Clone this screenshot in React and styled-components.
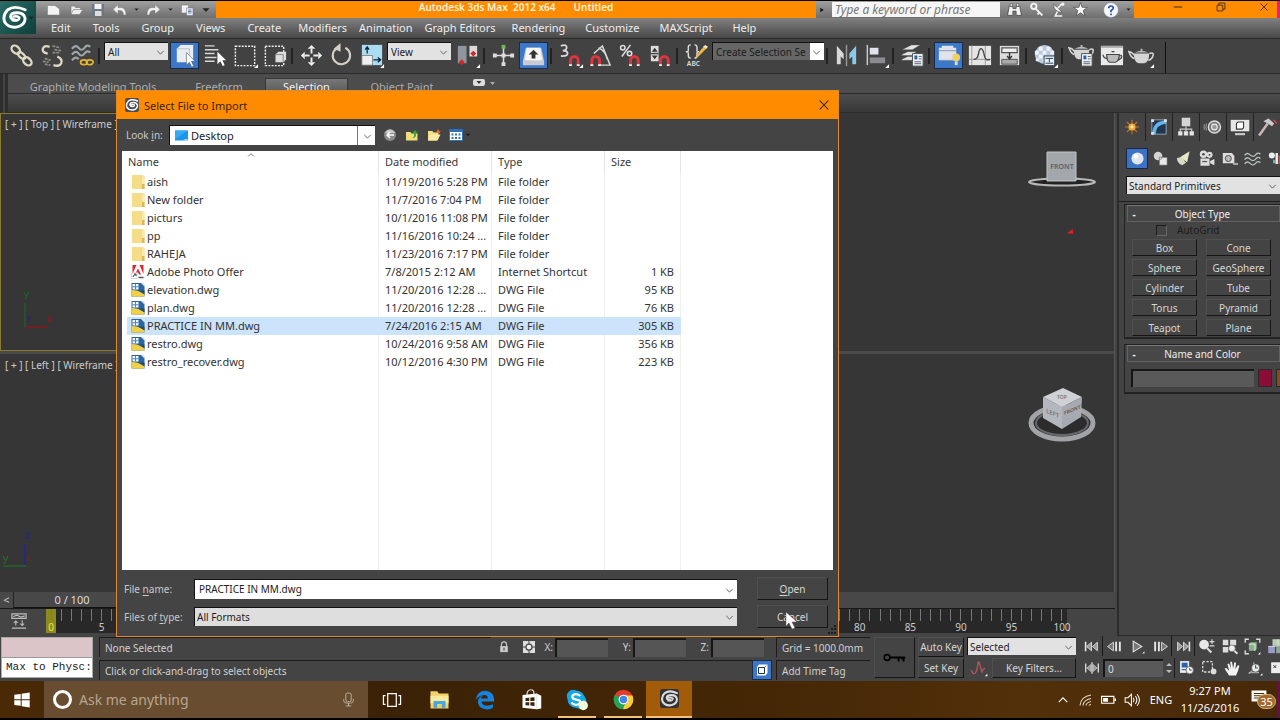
import React from "react";
import styled, { createGlobalStyle, css } from "styled-components";

const Global = createGlobalStyle`
  * { box-sizing: border-box; }
  body { margin: 0; background: #000; font-family: "Noto Sans", "Open Sans", sans-serif; font-size: 10px; color: #ddd; }
  button, input, select { font: inherit; color: inherit; margin: 0; padding: 0; border: 0; border-radius: 0; background: none; outline: none; }
  svg { display: block; flex: none; }
`;

/* ---------- drawings ---------- */
const L = "#e6e6e6";
const caret = <path d="M27 23v4h-4z" fill="#fff" />;
const magnet = <path d="M14 24v-5a4 4 0 0 1 8 0v5" fill="none" stroke="#e0343f" strokeWidth="3" />;
const magnetTips = <path d="M12.500 23h3v2h-3zM20.500 23h3v2h-3z" fill="#eee" />;
const teapot = (
  <>
    <path d="M6 12q0 9 5 10h6q5-1 5-10z" fill="#d5d5d5" />
    <path d="M7 11q7-4 14 0zM13 7h2v2h-2z" fill="#bbb" />
    <path d="M6.500 17Q3 16 1 10l3 1 3 3M22 12q5-2 4 2t-5 5" fill="none" stroke="#d5d5d5" strokeWidth="1.600" />
  </>
);
const sheet = (
  <>
    <path d="M14 12h11v13H14z" fill="#eef2f6" stroke="#555" />
    <path d="M16 14h3v4h-3z" fill="#2b5fa5" />
    <path d="M20.500 15h3M20.500 17.500h3M16 20.500h7M16 22.500h7" stroke="#567" />
  </>
);
const icons = {
  link: (
    <g fill="none" stroke="#ddd9c4" strokeWidth="2.400">
      <ellipse cx="7" cy="8" rx="5" ry="3.500" transform="rotate(42 7 8)" />
      <ellipse cx="13" cy="14" rx="4.500" ry="2.400" transform="rotate(42 13 14)" />
      <ellipse cx="19" cy="20" rx="5" ry="3.500" transform="rotate(42 19 20)" />
    </g>
  ),
  unlink: (
    <g fill="none" stroke="#ddd9c4" strokeWidth="2.400">
      <path d="M9 12Q3 11 4 7t7-2M19 15q6 3 4 7t-8 2" />
      <path d="M14 4l8 2M16 8l7 1M14 11l8 0M6 17l6 2M4 20l6 1M6 23l6 1" stroke="#8d8d86" strokeWidth="1.800" strokeDasharray="3 1" />
    </g>
  ),
  bind: (
    <>
      <path d="M3 7q4-5 7-1t6 0 6-1M3 13q4-5 7-1t6 0 6-1M3 19q4-5 7-1" fill="none" stroke="#9fa6aa" strokeWidth="2.200" />
      <path d="M12 21a3.500 2.500 0 1 0 7 0a3.500 2.500 0 1 0-7 0M18 21a3.500 2.500 0 1 0 7 0a3.500 2.500 0 1 0-7 0" fill="none" stroke="#e5b52b" strokeWidth="1.800" />
    </>
  ),
  selectObj: (
    <>
      <path d="M6 7l4-4h13v14l-4 4H6z" fill="#e9edf2" />
      <path d="M6 7h13v14" fill="none" stroke="#b7bfc9" />
      <path d="M16 11v13l3-3 2.500 5 2-1-2.300-5H25z" fill="#fff" stroke="#456" strokeWidth=".6" />
    </>
  ),
  byName: (
    <>
      <path d="M3 4h10M3 8h14M3 12h10M3 16h12M3 20h10" stroke="#d8d8d8" strokeWidth="1.500" />
      <path d="M16 10v13l3-3 2.500 5 2-1-2.300-5H25z" fill="#fff" />
    </>
  ),
  rect: <><path d="M3.500 4.500h20v20h-20z" fill="none" stroke="#eee" strokeWidth="1.500" strokeDasharray="2 1.300" />{caret}</>,
  windowSel: (
    <>
      <path d="M3.500 4.500h19v20h-19z" fill="none" stroke="#eee" strokeWidth="1.500" strokeDasharray="2 1.300" />
      <path d="M14 13l3-3h8v8l-3 3h-8z" fill="#ddd" /><path d="M14 13h8v8" fill="none" stroke="#888" />
    </>
  ),
  move: (
    <>
      <path d="M14 7v5M14 16v5M7 14h5M16 14h5" stroke="#eee" strokeWidth="2" />
      <path d="M14 3l4 4h-8zM14 25l4-4h-8zM3 14l4-4v8zM25 14l-4-4v8z" fill="#eee" />
    </>
  ),
  rotate: <><path d="M9 6.500a9 9 0 1 0 9-.5" fill="none" stroke="#d4d0c8" strokeWidth="2.200" /><path d="M13 1v9l-7-3z" fill="#d4d0c8" /></>,
  scale: (
    <>
      <path d="M4 3h21v21H4z" fill="#a9ddf4" /><path d="M4 14h11v10H4z" fill="#efefef" stroke="#666" strokeWidth=".7" />
      <path d="M9.500 12V5M7.500 8l2-3 2 3M16 18.500h7M20.500 16l3 2.500-3 2.500" fill="none" stroke="#123" strokeWidth="1.300" />{caret}
    </>
  ),
  pivot: (
    <>
      <path d="M4 4h9v18H4z" fill="#8f969e" /><path d="M16 4h8v11h-8z" fill="#d9d9d9" />
      <path d="M8 18l3 3-3 3-3-3zM20 9l3 3-3 3-3-3z" fill="#d22" />{caret}
    </>
  ),
  manip: (
    <><path d="M5 14h18M14 6v17" stroke="#ddd" strokeWidth="1.600" /><path d="M12 3h4v4h-4z" fill="#6dbb57" /><path d="M3 12h4v4H3zM21 12h4v4h-4zM12 21h4v4h-4zM12 12h4v4h-4z" fill="#ddd" /></>
  ),
  keyboard: (
    <><path d="M3 20L6 6h16l3 14v4H3z" fill="#c8cbd0" /><path d="M5 19L7 6h14l2 13z" fill="#f6f6f6" /><path d="M14 8l5 5h-3v4h-4v-4H9z" fill="#333" /></>
  ),
  snap3: <><path d="M4 4q6-2 6 1.500T6 9q5 0 5 3t-7 2.500" fill="none" stroke="#ddd" strokeWidth="1.800" />{magnet}{magnetTips}{caret}</>,
  angle: (
    <><path d="M7 12L16 4l8 20H14M12 6q7 3 9 12" fill="none" stroke="#d8d8d8" strokeWidth="1.500" /><g transform="translate(-9 0)">{magnet}{magnetTips}</g></>
  ),
  pct: (
    <><g fill="none" stroke="#ddd" strokeWidth="1.600"><circle cx="6" cy="6" r="2.300" /><circle cx="13" cy="12" r="2.300" /><path d="M14 3L5 15" /></g>{magnet}{magnetTips}</>
  ),
  spin: (
    <><path d="M4 4h8v16H4z" fill="#ddd" /><path d="M4 12h8" stroke="#444" strokeWidth="1.500" /><path d="M8 6l3 4H5zM8 18l3-4H5z" fill="#333" />{magnet}{magnetTips}</>
  ),
  abc: (
    <>
      <path d="M8 3q-3 0-2.500 4T3 10q3 0 2.500 3T8 17M12 3q3 0 2.500 4t2 3q-2.500 0-2 3T12 17" fill="none" stroke="#ddd" strokeWidth="1.500" />
      <path d="M13 15L22 4l3 2-10 10z" fill="#e9b64a" /><path d="M21 5l2-2 3 2-2 2z" fill="#f2e6c4" />
      <text x="4" y="25" fontSize="7" fontWeight="600" fill="#ddd">ABC</text>
    </>
  ),
  mirror: <><path d="M4 4l7 8v6l-3-3v8H4z" fill="#d8d8d8" /><path d="M14 3v22" stroke="#999" strokeWidth="1.500" /><path d="M24 4l-7 8v6l3-3v8h4z" fill="#8ccbe8" /></>,
  align: <><path d="M4.500 3v21" stroke="#ccc" strokeWidth="1.500" /><path d="M7 6h9v7H7z" fill="#dfe3ee" /><path d="M7 16h16v6H7z" fill="#8c8c90" />{caret}</>,
  layers: <><path d="M3 8l10-5h9l-8 5zM3 13l6-3h9l-5 4H3zM3 18l6-3h5v4H3z" fill="#e4e4e4" stroke="#555" strokeWidth=".5" />{sheet}</>,
  ribbon: (
    <><path d="M4 6h3V4h12v2h3v13H4z" fill="#dfe3ec" /><path d="M4 9h18M6 19h14" stroke="#8c95a8" /><circle cx="22" cy="16" r="4" fill="#f3cf5b" /><path d="M20.500 20h3v4h-3z" fill="#ddd" /></>
  ),
  curve: <><path d="M3 4h23v20H3z" fill="#e5e5e5" /><path d="M6 4v20M3 18h23M20 4v20" stroke="#999" /><path d="M8 18q4 0 5-6t3-5 3 7 6 4" fill="none" stroke="#444" strokeWidth="1.400" /></>,
  schem: <><path d="M4 4h20v20H4z" fill="#ddd" /><path d="M6 6h16v5H6z" fill="#eee" stroke="#555" strokeWidth="1.300" /><path d="M6 18h16v5H6z" fill="#aaa" stroke="#555" /><path d="M14 11v6M11.500 14.500l2.500 3 2.500-3" stroke="#333" strokeWidth="1.400" fill="none" /></>,
  material: (
    <><circle cx="13" cy="13" r="10" fill="#b9c8dc" /><path d="M7 5h4v4H7zM15 5h4v4h-4zM3 9h4v4H3zM11 9h4v4h-4zM19 9h4v4h-4zM7 13h4v4H7zM11 17h3v4h-3zM4 17h3v3H4z" fill="#eef3fa" /><path d="M12.500 14.500h11v10h-11z" fill="#e6ecf4" stroke="#345" /><path d="M14 17h8M14 22h8M18 17v4" stroke="#345" />{caret}</>
  ),
  setup: <><g transform="translate(0 -4)">{teapot}</g>{sheet}</>,
  frame: <><path d="M3 4h23v20H3z" fill="#e9e9e9" /><path d="M3 5h23" stroke="#aaa" strokeWidth="2" /><path d="M9 13q0 7 3 8h6q4-1 4-8zM9 17q-3 0-4-4M22 14q4-1 2 3l-3 2M14 10h3" fill="#bbb" stroke="#444" strokeWidth="1.200" /></>,
  render: <>{teapot}{caret}</>,
  /* command panel */
  sun: <><path d="M14 4v20M4 14h20M7 7l14 14M21 7L7 21" stroke="#c9761f" strokeWidth="1.500" /><circle cx="14" cy="14" r="5" fill="#f2a83c" /><circle cx="14" cy="14" r="2" fill="#fff0b8" /></>,
  modify: <><path d="M4 4h20v20H4z" fill="#20374e" stroke="#b9c4cc" /><path d="M7 24Q7 8 24 7" fill="none" stroke="#62b5ee" strokeWidth="5" /><path d="M3 3h4v4H3zM21 3h4v4h-4zM3 21h4v4H3z" fill="#ddd" /></>,
  hierarchy: <><path d="M8 1h12v12H8z" fill="#d5d5d5" /><path d="M14 13v4M6 21v-4h16v4M14 17v5" stroke="#ccc" strokeWidth="1.600" fill="none" /><path d="M3 20h6v6H3zM11 20h6v6h-6zM19 20h6v6h-6z" fill="#e3e3e3" /></>,
  motion: <><circle cx="16" cy="14" r="8.500" fill="#777" stroke="#ddd" strokeWidth="2" /><circle cx="16" cy="14" r="4" fill="#999" stroke="#eee" strokeWidth="1.500" /><path d="M5 9q-2 5 0 10M2 10q-1 4 0 8" stroke="#999" fill="none" strokeWidth="1.400" /></>,
  display: <><path d="M1 4h26v16H1z" fill="#e6e6e6" /><path d="M9 9l2-2h8v8l-2 2H9z" fill="#fff" stroke="#333" strokeWidth="1.500" /><path d="M7 24h14" stroke="#ccc" strokeWidth="3" /></>,
  hammer: <><path d="M3 26L15 9" stroke="#c9b5b0" strokeWidth="3.500" /><path d="M9 6l7-4 8 7-3 4-6-4z" fill="#ccc" /><path d="M23 4l5 5" stroke="#c44" strokeWidth="2.500" /></>,
  sphere: <><circle cx="14" cy="14" r="10" fill="#dfe6ef" /><circle cx="11" cy="10" r="4" fill="#fff" /></>,
  shapes: <><circle cx="10" cy="10" r="7" fill="#d4d4d4" /><path d="M12 12h13v13H12z" fill="#e8e8e8" stroke="#555" /><path d="M12 16q5 0 5-4" stroke="#777" fill="none" /></>,
  light: <><path d="M24 2l-4 18-12-8z" fill="#e9e6cc" /><path d="M3 13l8-1 7 9-6 4Q4 22 3 13z" fill="#d9dac6" /></>,
  camera: <><circle cx="9" cy="7" r="6" fill="#ddd" /><circle cx="19" cy="8" r="5" fill="#ddd" /><path d="M4 14h15v12H4zM20 18l7-3v10l-7-3z" fill="#ddd" /><circle cx="9" cy="7" r="2" fill="#444" /><circle cx="19" cy="8" r="1.500" fill="#444" /><path d="M7 19h8" stroke="#555" strokeWidth="2" /></>,
  tape: <><path d="M3 5h15l4 5v12H3z" fill="#ddd" /><circle cx="12" cy="14" r="5" fill="#bbb" stroke="#444" strokeWidth="1.500" /><path d="M20 23h8" stroke="#ccc" strokeWidth="2.500" /></>,
  waves: <path d="M1 9q4-6 9-1t9 0 8-1M1 16q4-6 9-1t9 0 8-1M1 23q4-6 9-1t9 0 8-1" fill="none" stroke="#b9c0c0" strokeWidth="2.200" />,
  systems: <><circle cx="8" cy="9" r="5" fill="#eee" /><path d="M14 5h4v18h-4z" fill="#eee" /><path d="M19 9h4v14h-4z" fill="#d44" /><path d="M10 16h4v6h-4z" fill="#6bb" /></>,
  /* quick access */
  newDoc: <path d="M2 5h15l9 7v12H2z" fill="#f2f2f2" stroke="#777" />,
  open: <path d="M3 22V6h7l2 3h10v4M3 23l5-10h19l-7 10z" fill="#ededed" stroke="#777" strokeWidth="1.200" />,
  save: <><path d="M2 2h24v24H2z" fill="#6e7784" /><path d="M7 2h14v10H7z" fill="#f3f3f3" /><path d="M8 16h13v10H8z" fill="#ddd" /></>,
  undo: <path d="M1 13l10-10v6h7q9 1 9 15h-5q0-8-6-9h-5v7z" fill="#f0f0f0" stroke="#777" />,
  redo: <path d="M27 13l-10-10v6h-7q-9 1-9 15h5q0-8 6-9h5v7z" fill="#f0f0f0" stroke="#777" />,
  project: <><path d="M2 4h14v16H2z" fill="#f0f0f0" stroke="#777" /><path d="M12 10h13v15H12z" fill="#eef" stroke="#667" /><path d="M15 14h7M15 17h7M15 20h7" stroke="#368" strokeWidth="1.500" /></>,
  down: <path d="M2 8h24l-12 13z" fill="#222" />,
  right: <path d="M6 3l16 11-16 11z" fill="#111" />,
  binoc: <><path d="M4 8h7v4h6V8h7l3 17H17v-8h-6v8H1z" fill="#f1f1f1" stroke="#444" strokeWidth="1.500" /><path d="M6 3h4v5H6zM18 3h4v5h-4z" fill="#f1f1f1" stroke="#444" /></>,
  key: <><circle cx="9" cy="8" r="5" fill="none" stroke="#f4f4f4" strokeWidth="3.500" /><path d="M12 12l13 13M20 19l-4 4" stroke="#f4f4f4" strokeWidth="3.500" /></>,
  dish: <><path d="M5 4q0 15 16 15z" fill="#f4f4f4" stroke="#444" /><path d="M12 12l8-8M12 18l-4 8h13" stroke="#f4f4f4" strokeWidth="2.800" fill="none" /><circle cx="22" cy="4" r="3" fill="#f4f4f4" /></>,
  star: <path d="M14 1l3 9h10l-8 6 3 10-8-6-8 6 3-10-8-6h10z" fill="#fafafa" stroke="#444" strokeWidth="1.300" />,
  help: <><circle cx="14" cy="14" r="13" fill="#f7f7f7" stroke="#6b7f9f" /><path d="M10 11q0-4 4-4t4 4q0 2-4 4v3M14 20v3" fill="none" stroke="#2454b4" strokeWidth="3" /></>,
  /* file dialog */
  back: <><circle cx="14" cy="14" r="12" fill="#8b8b8b" /><path d="M3 10q11-14 22 0" fill="#ccc" /><path d="M22 14H8M14 8l-6 6 6 6" fill="none" stroke="#fff" strokeWidth="3" /></>,
  up: <><path d="M2 8h9l2 3h12v14H2z" fill="#f4dc7c" /><path d="M13 21q6-1 5-10h-4l6-7 6 7h-4q1 9-9 10z" fill="#35a630" /></>,
  newFolder: <><path d="M2 6h9l2 3h10v4l-4 12H2z" fill="#f7df85" /><path d="M7 13h20l-6 12H2z" fill="#fbe9a5" /><path d="M23 3v8M19 7h8M20 4l6 6" stroke="#e2632d" strokeWidth="2" /></>,
  views: <><path d="M1 3h26v22H1z" fill="#fff" stroke="#2d6fbd" strokeWidth="2" /><path d="M1 4h26v4H1z" fill="#2d6fbd" /><g fill="#2f74bd"><path d="M5 11h4v4H5zM12 11h4v4h-4zM19 11h4v4h-4zM5 18h4v4H5zM12 18h4v4h-4zM19 18h4v4h-4z" /></g></>,
  folder: <><path d="M2 0h20l5 2v26H2z" fill="#f5dc86" /><path d="M22 3h5v25h-5z" fill="#fae9ad" /><path d="M22 18h5v10h-5z" fill="#d8b95c" /></>,
  adobe: <><path d="M4 0h20v18H4z" fill="#fff" /><path d="M3 18L11 0H3zM25 18L17 0h8zM14 7l6 12h-4l-2-4h-4z" fill="#d9282f" /><path d="M1 16h11v11H1z" fill="#fff" stroke="#aaa" /><path d="M4 24q0-4 5-5M6 18h4v4" fill="none" stroke="#246" strokeWidth="2" /><path d="M15 25h10" stroke="#555" strokeWidth="3" /></>,
  dwg: <><path d="M1 0h20l6 6v21H1z" fill="#2c66a0" /><path d="M1 14q14 0 26 8v5H1z" fill="#f0d046" /><path d="M14 15h13v8z" fill="#284a70" /><path d="M3 2h12v11H3z" fill="#f5f9fc" /><path d="M9 2v11M3 7.500h12" stroke="#3b8bc9" strokeWidth="2" /><path d="M20 0h7v7z" fill="#dfe8ef" /></>,
  monitor: <><path d="M1 3h26v20H1z" fill="#1b95ea" /><path d="M1 3h26L1 20z" fill="#3aa9f3" /><path d="M20 20h6v3h-6z" fill="#bde" /></>,
  /* status bar */
  lock: <><path d="M5 12h18v14H5z" fill="#c9c9c9" /><path d="M8 12V8q0-6 6-6t6 6v4" fill="none" stroke="#c9c9c9" strokeWidth="2.500" /><path d="M14 16v6" stroke="#444" strokeWidth="2.500" /></>,
  gear: <><path d="M2 2h24v24H2z" fill="#ddd" /><circle cx="14" cy="14" r="6" fill="#eee" stroke="#444" strokeWidth="2.500" /><path d="M14 2v6M14 20v6M2 14h6M20 14h6" stroke="#444" strokeWidth="2" /></>,
  cubeOut: <><path d="M8 3h17v17l-4 5H4V8z" fill="#fff" /><path d="M7 9h12v12H7z" fill="#fff" stroke="#234" strokeWidth="2" /><path d="M19 9l4-4" stroke="#234" /></>,
  bigKey: <><circle cx="5" cy="14" r="3.500" fill="none" stroke="#000" strokeWidth="2" /><path d="M9 14h18M19 14v5M25 14v5M22 15h3v3" stroke="#000" strokeWidth="2.400" fill="none" /></>,
  sine: <><path d="M2 17q3 8 6 5t4-13 4 2 3 9 4-6" fill="none" stroke="#b9555f" strokeWidth="2" />{caret}</>,
  trackOpen: <><path d="M3 3h22v7H3zM3 25h22" fill="none" stroke="#bbb" strokeWidth="2" /><path d="M5 7l6-2 6 3 6-2M9 21v-7M6 17l3-3 3 3M19 13v7M16 18l3 3 3-3" stroke="#bbb" strokeWidth="1.700" fill="none" /></>,
  start: <><path d="M3 5v18" stroke={L} strokeWidth="3" /><path d="M14 6v16L5 14zM25 6v16l-9-8z" fill="#999" stroke={L} strokeWidth="1.600" /></>,
  end: <><path d="M25 5v18" stroke={L} strokeWidth="3" /><path d="M14 6v16l9-8zM3 6v16l9-8z" fill="#999" stroke={L} strokeWidth="1.600" /></>,
  prev: <><path d="M12 6v16L1 14z" fill="#777" stroke={L} strokeWidth="1.600" /><path d="M17 5v18M24 5v18" stroke={L} strokeWidth="3.500" /></>,
  next: <><path d="M16 6v16l11-8z" fill="#777" stroke={L} strokeWidth="1.600" /><path d="M4 5v18M11 5v18" stroke={L} strokeWidth="3.500" /></>,
  play: <><path d="M6 4v20l16-10z" fill="#777" stroke={L} strokeWidth="2" />{caret}</>,
  keyMode: <><path d="M3 6v16M25 6v16M14 4v20" stroke={L} strokeWidth="2.200" /><path d="M12 8v12l-7-6zM16 8v12l7-6z" fill="#999" stroke={L} /></>,
  timeCfg: <><path d="M2 2h17v22H2z" fill="#e8eef6" /><path d="M5 5h11v9H5z" fill="#2d62a8" /><path d="M5 18h8" stroke="#456" strokeWidth="2" /><circle cx="20" cy="19" r="7" fill="#f5f5f5" stroke="#555" strokeWidth="1.500" /><path d="M20 15v4h4" stroke="#333" fill="none" strokeWidth="1.500" /></>,
  zoom: <><circle cx="10" cy="11" r="8" fill="#e8e8e8" /><path d="M15 17l7 7" stroke="#ddd" strokeWidth="3.500" /><path d="M23 2v8M19 6h8M19 13h8" stroke="#ddd" strokeWidth="1.800" /></>,
  zoomAll: <><path d="M3 3h9v9H3zM15 3h10v9H15zM3 15h9v9H3z" fill="#ddd" /><circle cx="18" cy="17" r="5.500" fill="#eee" stroke="#555" /><path d="M22 21l5 5" stroke="#ddd" strokeWidth="3" /></>,
  extents: <><path d="M2 8V2h6M20 2h6v6M8 26H2v-6" stroke="#ddd" strokeWidth="2.200" fill="none" /><path d="M8 10l3-3h10v11l-3 3H8z" fill="#8fae8c" /><path d="M8 10h10v11" stroke="#dfe" fill="none" strokeWidth="1.500" />{caret}</>,
  extAll: <><path d="M9 2h18v11H9z" fill="#b9cdb5" /><path d="M2 13h11v12H2z" fill="#9c9bc6" /><path d="M15 15h12v10H15z" fill="#8a9" /><path d="M18 2v11M2 14h25" stroke="#eee" /></>,
  region: <><path d="M3 3h17v18H3z" fill="none" stroke="#ddd" strokeWidth="2.200" strokeDasharray="4 2.500" /><circle cx="22" cy="20" r="5" fill="#ddd" /></>,
  hand: <path d="M9 27Q5 22 1 15l3-1 5 5-3-12 3-1 3 9-1-12h3l2 12 2-11 3 1-1 11 4-7 3 1q-2 9-6 17z" fill="#f3f3f3" />,
  orbit: <><path d="M3 22h18M12 4v12L3 24" stroke="#aaa" strokeWidth="2" fill="none" /><circle cx="15" cy="14" r="7" fill="#eee" stroke="#444" /><path d="M15 9v5h4" stroke="#363" strokeWidth="2" fill="none" />{caret}</>,
  maxi: <><path d="M2 4h25v19H2z" fill="#eee" /><path d="M6 9l5 5M11 9l-5 5M18 9l5 5M23 9l-5 5" stroke="#333" strokeWidth="1.700" /></>,
  /* taskbar */
  windows: <path d="M2 6l10-1.500V13H2zM13.500 4.300L26 2.500V13H13.500zM2 14.500h10V23L2 21.700zM13.500 14.500H26v11l-12.500-1.800z" fill="#fff" />,
  mic: <><rect x="9" y="2" width="10" height="16" rx="3" fill="none" stroke="#cbbda8" strokeWidth="1.600" /><path d="M5 13v3q0 5 9 5t9-5v-3M14 21v5M9 26h10" fill="none" stroke="#cbbda8" strokeWidth="1.600" /></>,
  taskview: <path d="M8 5h12v18H8zM5 8H2v12h3M23 8h3v12h-3" fill="none" stroke="#fff" strokeWidth="1.700" />,
  explorer: <><path d="M2 3h9l2 3h13v20H2z" fill="#f2cf67" /><path d="M2 9h24v10H2z" fill="#fbe9a0" /><path d="M6 25v-9h16v9h-5v-5h-6v5z" fill="#47a8dc" /></>,
  edge: <path d="M1 14Q3 1 15 1q12 1 12 15H9q1 6 8 6 4 0 8-2v5q-5 3-10 2Q4 25 4 16q1-7 8-9-4 3-4 5h10q0-5-5-5-7 0-12 7z" fill="#1684de" />,
  store: <><path d="M2 8l19-2 6 3v17l-6 1-19-2z" fill="#fff" /><path d="M21 6v21" stroke="#ddd" /><path d="M8 8q0-7 5-7t4 6" fill="none" stroke="#ddd" strokeWidth="1.600" /><path d="M6 12l5-.5V16H6zM12.500 11.300L18 11v5h-5.500zM6 17.500h5V22l-5-.5zM12.500 17.500H18v5l-5.500-.5z" fill="#3b2508" /></>,
  skype: <><circle cx="9" cy="9" r="8" fill="#14a8e6" /><circle cx="17" cy="16" r="9" fill="#14a8e6" /><circle cx="13" cy="13" r="11" fill="#14a8e6" /><path d="M18 9q-2-3-6-2.500T8 10t5 3.500 5 3-4 3.500-7-3" fill="none" stroke="#fff" strokeWidth="2.800" /><circle cx="22" cy="21" r="6" fill="#eefbd8" /></>,
  chrome: <><circle cx="14" cy="14" r="13" fill="#e33b2e" /><path d="M14 14L2.700 7.500A13 13 0 0 0 14 27z" fill="#23a455" /><path d="M14 14L14 27A13 13 0 0 0 25.800 8.500H14z" fill="#f8cf32" /><path d="M14 14L8 18l4 9 5-8z" fill="#23a455" /><circle cx="14" cy="14" r="6.500" fill="#fff" /><circle cx="14" cy="14" r="5" fill="#4283ee" /></>,
  chevUp: <path d="M4 19L14 9l10 10" fill="none" stroke="#fff" strokeWidth="2.500" />,
  wifi: <g fill="none" stroke="#e4d8c6" strokeWidth="2.200"><path d="M2 25Q4 7 24 4M8 25q1-11 16-14M14 25q1-6 10-8M20 25q0-2 4-2" /></g>,
  battery: <><path d="M1 8h23v13H1z" fill="none" stroke="#fff" strokeWidth="2.200" /><path d="M4 11h9v7H4zM25 12h3v5h-3z" fill="#fff" /></>,
  volume: <><path d="M2 10h5l6-6v20l-6-6H2z" fill="none" stroke="#fff" strokeWidth="1.800" /><path d="M16 10q3 4 0 8M20 7q5 7 0 14M23 4q8 10 0 20" fill="none" stroke="#fff" strokeWidth="1.800" /></>,
  note: <><path d="M1 1h26v19H17l-5 6v-6H1z" fill="#fff" /><path d="M5 6h18M5 10h18M5 14h12" stroke="#4a2c08" strokeWidth="1.800" /></>,
  dropdown: <path d="M4 9l10 10L24 9" fill="none" stroke="#555" strokeWidth="2.800" />,
  close: <path d="M4 4l20 20M24 4L4 24" stroke="#3d2a10" strokeWidth="2.500" />,
  min: <path d="M2 14h24" stroke="#3d2a10" strokeWidth="2.800" />,
  restore: <path d="M3 9h16v16H3zM8 9V3h17v17h-6" fill="none" stroke="#3d2a10" strokeWidth="2.500" />,
};
const Icon = ({ name, size = 28, h }) => (
  <svg width={size} height={h || size} viewBox="0 0 28 28" aria-hidden="true">{icons[name]}</svg>
);
const MaxLogo = ({ size, plate, ink }) => (
  <svg width={size} height={size} viewBox="0 0 28 28" aria-hidden="true">
    {plate && <rect width="28" height="28" rx="4" fill={plate} />}
    <path d="M25 6Q14 1 7 6 1 12 4 19q4 6 12 5 9-2 9-9-1-6-8-6-7 0-7 4 0 3 5 3.500" fill="none" stroke={ink} strokeWidth="3" strokeLinecap="round" />
    <path d="M12 17q7 1 7-3-3-2-6-1" fill="none" stroke={ink} strokeWidth="2.500" strokeLinecap="round" />
  </svg>
);

/* ---------- shared controls ---------- */
const SelectBox = styled.span`
  position: relative; display: flex; height: ${(p) => p.$h || 18}px; flex: ${(p) => (p.$w ? `0 0 ${p.$w}px` : "1 1 0")}; min-width: 0;
  background: ${(p) => p.$bg || "#e2e2e2"}; color: ${(p) => p.$ink || "#222"};
  border: solid #111; border-width: 1px 0 0 1px;
  select { appearance: none; width: 100%; padding-left: ${(p) => p.$pad || 3}px; font-size: ${(p) => p.$fs || 10}px; }
  svg { position: absolute; right: 3px; top: calc(50% - 4px); pointer-events: none; }
`;
const Select = ({ id, label, value, ...p }) => (
  <SelectBox {...p}>
    <select id={id} aria-label={label}><option>{value}</option></select>
    <Icon name="dropdown" size={9} />
  </SelectBox>
);
const FlatButton = styled.button`
  display: flex; align-items: center; justify-content: center; white-space: nowrap; min-width: 0;
  height: ${(p) => p.$h}px; color: #d6d6d6;
  background: #444; border: 1px solid; border-color: #505050 #151515 #151515 #505050;
  u { text-underline-offset: 2px; }
`;

/* ---------- application frame ---------- */
const Window = styled.div`position: relative; display: flex; flex-direction: column; min-height: 100vh; overflow: hidden; background: #444; border: solid #000; border-width: 1px 0 2px;`;
const Header = styled.header`display: flex; background: linear-gradient(#ff8c00 17px, #808080 17px, #484848 37px); height: 37px;`;
const LogoButton = styled.button`width: 36px; height: 33px; display: flex; align-items: center; padding-left: 1px; background: linear-gradient(135deg, #2c6d66, #0c3f3c);`;
const HeaderBody = styled.div`flex: 1; min-width: 0;`;
const TitleBar = styled.div`display: flex; height: 17px; color: #fff3dc;`;
const GreyStrip = styled.div`
  display: flex; align-items: center; width: ${(p) => p.$w}px; background: linear-gradient(#a0a0a0, #6e6e6e);
  gap: 7px; padding: 0 ${(p) => p.$pad}px; overflow: hidden;
  button { display: flex; }
`;
const Title = styled.h1`flex: 1; margin: 0; display: flex; justify-content: center; gap: 18px; font-size: 10px; line-height: 12px; font-weight: 600; white-space: pre;`;
const Search = styled.input`flex: 1; min-width: 0; height: 15px; padding-left: 3px; background: #f6f6f6; color: #555; font-style: italic; font-size: 12px; &::placeholder { color: #777; }`;
const HelpButton = styled.button`margin-left: 8px;`;
const WinControls = styled.div`display: flex; width: 146px; justify-content: flex-end; align-items: flex-start; gap: 33px; padding: 1px 8px 0 0; border-right: 3px solid #f0188c; button { display: flex; }`;
const MenuBar = styled.nav`display: flex; align-items: center; height: 20px; padding-left: 4px;`;
const MenuItem = styled.button`padding: 0 ${(p) => p.$pad}px; color: #eee; font-size: 11px; line-height: 20px; white-space: nowrap;`;

const Toolbar = styled.div`display: flex; height: 36px; gap: 2px; padding: 3px 0 0 8px; background: #424242; border: solid #2a2a2a; border-width: 1px 0;`;
const Tool = styled.button`
  display: flex; align-items: center; justify-content: center; flex: 0 0 28px; height: ${(p) => p.$h || 27}px;
  ${(p) => p.$on && css`background: #3b78c9; border: 1px solid #1b2c48;`}
`;
const ToolSep = styled.span`flex: 0 0 4px; height: 16px; margin-top: 6px; border-left: 2px solid #222;`;
const ToolEnd = styled.span`margin-left: 8px; border-left: 1px solid #111;`;

const Ribbon = styled.div`border-left: 8px double #2e2e2e;`;
const RibbonTabs = styled.div`display: flex; height: 19px; align-items: flex-end; background: #4c4c4c; padding-left: 6px;`;
const RibbonTab = styled.button`
  height: 15px; margin-right: ${(p) => p.$after || 0}px; width: ${(p) => p.$w}px; color: ${(p) => (p.$on ? "#f0f0f0" : "#adadad")};
  font-size: 11px; line-height: 11px; white-space: nowrap; border: 1px solid transparent; border-bottom: 0;
  ${(p) => p.$on && css`background: linear-gradient(#777, #5a5a5a); border-color: #383838;`}
`;
const RibbonPanel = styled.div`height: 20px; background: linear-gradient(#4d4d4d, #383838); border: solid #2c2c2c; border-width: 1px 0;`;

const Main = styled.main`display: flex; flex: 1; min-height: 0;`;
const Stage = styled.div`flex: 1; min-width: 0; display: flex; flex-direction: column;`;
const Viewports = styled.div`flex: 1; min-height: 0; display: grid; grid-template: 1fr 1fr / 1fr 1fr; gap: 3px; background: #4a4a4a; border-right: 1px solid #555;`;
const Viewport = styled.section`
  background: #363636; border: 1px solid ${(p) => (p.$active ? "#8c7a2c" : "#363636")};
  display: flex; flex-direction: column; justify-content: space-between; min-width: 0;
`;
const ViewLabel = styled.span`padding: 1px 0 0 4px; line-height: 18px; color: #ccc; white-space: pre;`;
const Axis = styled.div`padding: 0 0 20px ${(p) => p.$x}px;`;
const Cube = styled.div`display: flex; justify-content: flex-end; padding: ${(p) => p.$top}px 16px 0 0;`;

const Slider = styled.div`
  display: flex; height: 17px; background: #484848; border-bottom: 1px solid #191919; font-size: 11px;
  button { width: 14px; color: #ccc; line-height: 16px; border-right: 1px solid #222; }
  output { width: 116px; text-align: center; line-height: 16px; color: #ddd; border-bottom: 1px solid #111; }
`;
const TrackBar = styled.div`display: flex; height: 27px; background: #444; border-bottom: 3px solid #444;`;
const TrackButton = styled.button`flex: 0 0 46px; display: flex; align-items: center; padding-left: 10px;`;
const Ruler = styled.div`flex: 1; display: flex; margin-right: 48px; background: #282828;`;
const Tick = styled.span`
  flex: 1; min-width: 0; display: flex; flex-direction: column; align-items: center; font-size: 10px; line-height: 12px; color: #ccc; white-space: nowrap;
  ${(p) => p.$now && css`background: #8d8a1f; color: #e9e64a;`}
  &::before { content: ""; flex: 0 0 12px; width: 1px; background: #777; }
`;

const Panel = styled.aside`flex: 0 0 163px; margin-left: 2px; overflow: hidden; background: #444; border-left: 2px solid #2c2c2c; border-bottom: 1px solid #2a2a2a;`;
const PanelTabs = styled.div`display: flex; height: 28px; button { flex: 0 0 27px; display: flex; align-items: center; justify-content: center; border-right: 1px solid #222; }`;
const PanelCats = styled.div`display: flex; height: 34px; align-items: center; padding-left: 7px; gap: 1px;`;
const Cat = styled.button`flex: 0 0 22px; height: 21px; display: flex; align-items: center; justify-content: center; ${(p) => p.$on && css`background: #3b72c4; border: 1px solid #192944;`}`;
const PanelSelect = styled.div`display: flex; padding: 1px 0 7px 7px; border-bottom: 1px solid #1e1e1e;`;
const Rollout = styled.section`margin: ${(p) => p.$top}px 0 0 5px; padding: 0 0 ${(p) => p.$pb}px 2px; border: solid #222; border-width: 1px 0 2px 1px;`;
const RolloutHead = styled.button`
  display: flex; width: 100%; height: 17px; align-items: center; color: #eee; background: #474747; border: 1px solid #626262; border-top-color: #777;
  span:first-child { width: 12px; font-weight: 700; } span:last-child { flex: 1; padding-right: 14px; }
`;
const AutoGrid = styled.label`
  display: flex; align-items: center; gap: 10px; height: 16px; padding-left: 29px; color: #1d1d1d;
  input { appearance: none; width: 11px; height: 11px; border: 1px solid #1c1c1c; border-right-color: #666; border-bottom-color: #666; }
`;
const ObjGrid = styled.div`display: grid; grid-template-columns: 65px 65px; gap: 3px 9px; padding: 1px 0 0 5px;`;
const NameRow = styled.div`display: flex; padding: 7px 0 0 4px; gap: 4px; input { width: 123px; height: 18px; background: #595959; border: solid #161616; border-width: 2px 0 0 2px; }`;
const Swatch = styled.button`flex: 0 0 14px; height: 18px; background: ${(p) => p.$c}; border: 1px solid #2a2a2a;`;

const Status = styled.footer`display: flex; height: 45px; background: #444; padding-bottom: 3px;`;
const Listener = styled.div`
  flex: 0 0 92px; display: flex; flex-direction: column; margin: 1px 6px 0 1px; border: 1px solid #aaa; background: #fff;
  input { height: 20px; width: 100%; font-family: "Liberation Mono", monospace; font-size: 11px; color: #222; padding-left: 4px; }
  input:first-child { background: #dcc5c8; border-bottom: 1px solid #999; }
`;
const Lines = styled.div`flex: 1; min-width: 0; display: flex; flex-direction: column; gap: 3px; padding-top: 1px;`;
const Line = styled.div`display: flex; align-items: center; height: 20px; color: #ccc;`;
const Sunk = styled.div`flex: ${(p) => (p.$w ? `0 0 ${p.$w}px` : "1 1 0")}; height: 20px; padding-left: 5px; line-height: 20px; white-space: nowrap; color: #d0d0d0; border: solid #1c1c1c; border-width: 1px 0 0 1px;`;
const LineIcons = styled.div`display: flex; align-items: center; gap: 12px; padding: 0 6px 0 7px;`;
const Coord = styled.label`
  display: flex; align-items: center; gap: 2px; width: 78px; color: #ccc; justify-content: flex-end; padding-right: 12px;
  input { width: 53px; height: 19px; background: #555; border: solid #161616; border-width: 2px 0 0 2px; }
`;
const Isolate = styled(Tool)`flex-basis: 20px; margin-right: 4px;`;
const KeyArea = styled.div`display: grid; grid-template-columns: 41px 46px 109px; grid-template-rows: 20px 20px; gap: 1px 3px; padding: 1px 0 0 4px; > :first-child { grid-row: span 2; }`;
const KeyLine = styled.div`display: flex; align-items: center; gap: 2px; > :last-child { flex: 1; }`;
const Transport = styled.div`
  flex: 0 0 204px; display: flex; flex-direction: column; gap: 1px; padding: 0 0 0 4px; overflow: hidden;
  > div { display: flex; align-items: center; height: 21px; }
`;
const Ctl = styled.button`flex: 0 0 ${(p) => p.$w || 23}px; height: 20px; display: flex; align-items: center; justify-content: center; ${(p) => p.$sep && css`border-right: 1px solid #1a1a1a;`}`;
const Frame = styled.input.attrs({ "aria-label": "Current frame" })`width: 60px; height: 18px; padding-left: 3px; background: #595959; border: solid #161616; border-width: 2px 0 0 2px; color: #ddd;`;

const Taskbar = styled.footer`display: flex; height: 37px; background: linear-gradient(90deg, #4a2a05, #3b2206 30%, #452705 60%, #52300a 80%, #472808);`;
const StartButton = styled.button`flex: 0 0 44px; display: flex; align-items: center; justify-content: center;`;
const Cortana = styled.label`
  flex: 0 1 324px; min-width: 0; display: flex; align-items: center; gap: 7px; padding: 0 12px 0 9px; background: #684d31;
  input { flex: 1; min-width: 0; font-size: 14px; color: #c0b09a; } input::placeholder { color: #b7a68f; opacity: 1; }
`;
const Ring = styled.span`width: 19px; height: 19px; border: 3px solid #fff; border-radius: 50%;`;
const Task = styled.button`
  flex: 0 0 ${(p) => p.$w || 46}px; display: flex; align-items: center; justify-content: center;
  ${(p) => p.$open && css`background: linear-gradient(#f3c27f, #f3c27f) center bottom / 38px 2px no-repeat;`}
  ${(p) => p.$on && css`background: #a25b08; border-bottom: 2px solid #f3c27f;`}
`;
const Tray = styled.div`margin-left: auto; display: flex; align-items: center; color: #fff; border-right: 3px solid #6d0d50;`;
const TrayButton = styled.button`flex: 0 0 23px; display: flex; justify-content: center;`;
const Lang = styled.button`width: 36px; font-size: 11px;`;
const Clock = styled.button`width: 62px; padding-bottom: 2px; font-size: 11px; line-height: 17px; white-space: nowrap; display: flex; flex-direction: column; align-items: center;`;
const Notify = styled.button`position: relative; width: 36px; display: flex; justify-content: center; svg { margin-bottom: 4px; }`;
const Badge = styled.span`position: absolute; right: 1px; top: 4px; width: 19px; height: 15px; border-radius: 8px; border: 1px solid #d8b078; background: #a46a2a; font-size: 11px; line-height: 13px;`;

/* ---------- file dialog ---------- */
const Dialog = styled.div`
  position: absolute; left: 116px; top: 89px; width: calc(100% - 557px); height: 547px;
  display: flex; flex-direction: column; background: #444; border: 1px solid #e08a2c;
`;
const DialogTitle = styled.div`
  display: flex; align-items: center; gap: 5px; height: 28px; padding: 0 8px; background: #ff8c00; color: #3c2408;
  h2 { flex: 1; margin: 0; font-size: 11px; font-weight: 400; } button { display: flex; }
`;
const LookRow = styled.div`
  display: flex; align-items: center; height: 32px; padding: 0 9px; color: #c8c8c8;
  label { width: 43px; white-space: nowrap; }
`;
const LookSelect = styled.div`
  position: relative; display: flex; width: 206px;
  > svg { position: absolute; left: 5px; top: 4px; }
  span { box-shadow: inset -17px 0 #fff, inset -18px 0 #777; }
`;
const LookTools = styled.div`display: flex; gap: 8px; padding-left: 8px; button { display: flex; align-items: center; gap: 2px; }`;
const ListPane = styled.div`flex: 1; min-height: 0; margin: 0 5px; background: #fff; position: relative;`;
const SortMark = styled.span`position: absolute; left: 125px; top: 0; svg { transform: rotate(180deg); }`;
const Files = styled.table`
  width: 100%; height: 100%; border-collapse: separate; border-spacing: 0; table-layout: fixed; color: #333; font-size: 11px; line-height: 16px;
  th { height: 22px; font-weight: 400; text-align: left; padding: 0 0 0 6px; border-right: 1px solid #e4e4e4; color: #3a3a3a; }
  td { padding: 0 0 0 6px; white-space: nowrap; overflow: hidden; border-right: 1px solid #f0f0f0; }
  tr > :last-child { border-right: 0; }
  td:nth-child(1) { padding-left: 4px; border-left: 5px solid #fff; }
  td:nth-child(4) { text-align: right; padding-right: 6px; }
`;
const FileRow = styled.tr`
  td { height: 18px; }
  ${(p) => p.$on && css`td:not(:last-child) { background: #cce4fb; border-right-color: #cce4fb; }`}
`;
const FileName = styled.span`display: flex; align-items: center; gap: 2px;`;
const Form = styled.div`
  display: grid; grid-template-columns: 70px 1fr 71px; row-gap: 5px; align-items: center; padding: 7px 10px 8px 7px; color: #c8c8c8;
  u { text-underline-offset: 2px; }
`;
const FieldWrap = styled.div`display: flex; margin-right: 20px; position: relative; > svg { position: absolute; right: 3px; top: 7px; }`;
const NameInput = styled.input`width: 100%; height: 20px; padding-left: 4px; background: #fff; color: #222; border: solid #111; border-width: 1px 0 0 1px;`;
const Grip = styled.span`position: absolute; right: 1px; bottom: 1px;`;
const Pointer = styled.span`position: absolute; right: 41px; bottom: 6px;`;

const menus = [
  { pad: 11, items: ["Edit", "Tools", "Group", "Views", "Create"] },
  { pad: 6, items: ["Modifiers", "Animation", "Graph Editors"] },
  { pad: 10, items: ["Rendering", "Customize", "MAXScript", "Help"] },
];
const files = [
  ["folder", "aish", "11/19/2016 5:28 PM", "File folder", ""],
  ["folder", "New folder", "11/7/2016 7:04 PM", "File folder", ""],
  ["folder", "picturs", "10/1/2016 11:08 PM", "File folder", ""],
  ["folder", "pp", "11/16/2016 10:24 ...", "File folder", ""],
  ["folder", "RAHEJA", "11/23/2016 7:17 PM", "File folder", ""],
  ["adobe", "Adobe Photo Offer", "7/8/2015 2:12 AM", "Internet Shortcut", "1 KB"],
  ["dwg", "elevation.dwg", "11/20/2016 12:28 ...", "DWG File", "95 KB"],
  ["dwg", "plan.dwg", "11/20/2016 12:28 ...", "DWG File", "76 KB"],
  ["dwg", "PRACTICE IN MM.dwg", "7/24/2016 2:15 AM", "DWG File", "305 KB"],
  ["dwg", "restro.dwg", "10/24/2016 9:58 AM", "DWG File", "356 KB"],
  ["dwg", "restro_recover.dwg", "10/12/2016 4:30 PM", "DWG File", "223 KB"],
];
const primitives = ["Box", "Cone", "Sphere", "GeoSphere", "Cylinder", "Tube", "Torus", "Pyramid", "Teapot", "Plane"];

/* Ruler labels every five frames, left blank where the dialog covers them. */
const tickLabel = (i) => (i % 5 === 0 && (i < 10 || i >= 80) ? i : "");

const tool = (name, on) => <Tool key={name} aria-label={name} $on={on}><Icon name={name} size={27} /></Tool>;

function ImportDialog() {
  return (
    <Dialog role="dialog" aria-label="Select File to Import">
      <DialogTitle>
        <MaxLogo size={14} plate="#4a4d52" ink="#fff" />
        <h2>Select File to Import</h2>
        <button aria-label="Close"><Icon name="close" size={12} /></button>
      </DialogTitle>
      <LookRow>
        <label htmlFor="look">Look <u>i</u>n:</label>
        <LookSelect>
          <Select id="look" value="Desktop" $bg="#fff" $h={20} $pad={21} $fs={11} />
          <Icon name="monitor" size={15} h={14} />
        </LookSelect>
        <LookTools>
          {["back", "up", "newFolder"].map((n) => <button key={n} aria-label={n}><Icon name={n} size={14} /></button>)}
          <button aria-label="View menu"><Icon name="views" size={14} /><Icon name="down" size={6} /></button>
        </LookTools>
      </LookRow>
      <ListPane>
        <SortMark><Icon name="dropdown" size={8} /></SortMark>
        <Files>
          <colgroup><col width="257" /><col width="113" /><col width="113" /><col width="76" /><col /></colgroup>
          <thead><tr><th>Name</th><th>Date modified</th><th>Type</th><th>Size</th><th /></tr></thead>
          <tbody>
            {files.map(([icon, name, date, type, size]) => (
              <FileRow key={name} $on={name.startsWith("PRACTICE")}>
                <td><FileName><Icon name={icon} size={14} />{name}</FileName></td>
                <td>{date}</td><td>{type}</td><td>{size}</td><td />
              </FileRow>
            ))}
            <tr><td /><td /><td /><td /><td /></tr>
          </tbody>
        </Files>
      </ListPane>
      <Form>
        <label htmlFor="fname">File <u>n</u>ame:</label>
        <FieldWrap><NameInput id="fname" defaultValue="PRACTICE IN MM.dwg" /><Icon name="dropdown" size={9} /></FieldWrap>
        <FlatButton $h={23}><span><u>O</u>pen</span></FlatButton>
        <label htmlFor="ftype">Files of <u>t</u>ype:</label>
        <FieldWrap><Select id="ftype" value="All Formats" $bg="#dedede" $h={19} $pad={2} /></FieldWrap>
        <FlatButton $h={23}>Cancel</FlatButton>
      </Form>
      <Grip><svg width="10" height="10" viewBox="0 0 10 10"><path d="M7 0h2v2H7zM4 3h2v2H4zM7 3h2v2H7zM1 7h2v2H1zM4 7h2v2H4zM7 7h2v2H7z" fill="#1d1d1d" /></svg></Grip>
      <Pointer><svg width="12" height="18" viewBox="0 0 12 18"><path d="M1 0v14l3-3 3 6 3-1-3-6h5z" fill="#fff" stroke="#555" strokeWidth=".5" /></svg></Pointer>
    </Dialog>
  );
}

export default function App() {
  return (
    <Window>
      <Global />
      <Header>
        <LogoButton aria-label="Application menu"><MaxLogo size={27} ink="#fff" /><Icon name="down" size={6} /></LogoButton>
        <HeaderBody>
          <TitleBar>
            <GreyStrip $w={180} $pad={9}>
              {[["newDoc", 17], ["open", 15], ["save", 14], ["undo", 15], ["down", 5], ["redo", 15], ["down", 5], ["project", 15], ["down", 8]].map(([n, s], i) => (
                <button key={i} aria-label={n}><Icon name={n} size={s} h={n === "down" ? s : 14} /></button>
              ))}
            </GreyStrip>
            <Title><span>Autodesk 3ds Max  2012 x64</span><span>Untitled</span></Title>
            <GreyStrip $w={318} $pad={3}>
              <button aria-label="Collapse"><Icon name="right" size={6} h={8} /></button>
              <Search aria-label="Search" placeholder="Type a keyword or phrase" />
              {["binoc", "key", "dish", "star"].map((n) => <button key={n} aria-label={n}><Icon name={n} size={15} /></button>)}
              <HelpButton aria-label="Help"><Icon name="help" size={16} /></HelpButton>
              <button aria-label="Help menu"><Icon name="down" size={5} /></button>
            </GreyStrip>
            <WinControls>
              {["min", "restore", "close"].map((n) => <button key={n} aria-label={n}><Icon name={n} size={10} /></button>)}
            </WinControls>
          </TitleBar>
          <MenuBar>{menus.map((g) => g.items.map((m) => <MenuItem key={m} $pad={g.pad}>{m}</MenuItem>))}</MenuBar>
        </HeaderBody>
      </Header>

      <Toolbar>
        {tool("link")}{tool("unlink")}{tool("bind")}<ToolSep />
        <Select label="Selection filter" value="All" $w={64} />
        {tool("selectObj", true)}{tool("byName")}{tool("rect")}{tool("windowSel")}<ToolSep />
        {tool("move")}{tool("rotate")}{tool("scale")}
        <Select label="Reference coordinate system" value="View" $w={64} />
        {tool("pivot")}<ToolSep />{tool("manip")}{tool("keyboard", true)}<ToolSep />
        {tool("snap3")}{tool("angle")}{tool("pct")}{tool("spin")}<ToolSep />{tool("abc")}
        <Select label="Named selection sets" value="Create Selection Se" $w={112} $bg="linear-gradient(90deg, #666 97px, #fff 97px)" $ink="#1c1c1c" />
        <ToolSep />{tool("mirror")}{tool("align")}<ToolSep />{tool("layers")}<ToolSep />
        {tool("ribbon", true)}{tool("curve")}{tool("schem")}<ToolSep />{tool("material")}<ToolSep />
        {tool("setup")}{tool("frame")}{tool("render")}<ToolEnd />
      </Toolbar>

      <Ribbon>
        <RibbonTabs>
          <RibbonTab $w={158} $after={16}>Graphite Modeling Tools</RibbonTab>
          <RibbonTab $w={62} $after={15}>Freeform</RibbonTab>
          <RibbonTab $w={83} $after={14} $on>Selection</RibbonTab>
          <RibbonTab $w={80} $after={30}>Object Paint</RibbonTab>
          <svg width="24" height="16" viewBox="0 0 24 16"><rect x="1" y="2" width="12" height="7" rx="2" fill="#ddd" /><path d="M4.500 4h5L7 7z" fill="#333" /><path d="M18 5h5l-2.500 3z" fill="#aaa" /></svg>
        </RibbonTabs>
        <RibbonPanel />
      </Ribbon>

      <Main>
        <Stage>
          <Viewports>
            <Viewport $active>
              <ViewLabel>[ + ] [ Top ] [ Wireframe ]</ViewLabel>
              <Axis $x={20}>
                <svg width="36" height="40" viewBox="0 0 36 40" fill="none"><path d="M4 37V13M3 2l2 4M8 2L4 9" stroke="#1d6a22" /><path d="M4 37h22M27 27l4 5M31 27l-4 5" stroke="#861a22" strokeWidth="1.500" /><path d="M6 27h3l-3 5h3" stroke="#23237a" /></svg>
              </Axis>
            </Viewport>
            <Viewport>
              <Cube $top={36}>
                <svg width="70" height="84" viewBox="0 0 70 84">
                  <ellipse cx="35" cy="32" rx="33" ry="3.500" fill="#222" stroke="#b8b8b8" strokeWidth="2" />
                  <path d="M20 2h29v29H20z" fill="#a3a6ab" stroke="#c2c4c8" />
                  <text x="35" y="19" textAnchor="middle" fontSize="7" fontWeight="600" fill="#5c5f65">FRONT</text>
                  <path d="M40 83l6-4v5z" fill="#e01c24" />
                </svg>
              </Cube>
            </Viewport>
            <Viewport>
              <ViewLabel>[ + ] [ Left ] [ Wireframe ]</ViewLabel>
              <Axis $x={0}>
                <svg width="34" height="42" viewBox="0 0 34 42" fill="none"><path d="M24 36V15" stroke="#2222a0" strokeWidth="1.500" /><path d="M24 4h5l-5 5h5" stroke="#2222a0" /><path d="M25 37H2M2 27l2 4M7 27l-4 8" stroke="#1d7a22" /><path d="M26 28l3 4M29 28l-3 4" stroke="#861a22" /></svg>
              </Axis>
            </Viewport>
            <Viewport>
              <Cube $top={32}>
                <svg width="70" height="58" viewBox="0 0 70 58">
                  <ellipse cx="35" cy="36" rx="31" ry="16" fill="#2c2c2c" stroke="#a2a3a6" strokeWidth="5" />
                  <ellipse cx="35" cy="36" rx="26" ry="12" fill="none" stroke="#66686c" strokeWidth="2" />
                  <path d="M16 10L36 1l19 9-20 10z" fill="#cfd1d5" /><path d="M16 10l19 10v22L16 31z" fill="#b4b7bd" /><path d="M55 10L35 20v22l19-12z" fill="#a7aab1" />
                  <text x="19" y="27" fontSize="6" fontWeight="600" fill="#777" transform="skewY(22) translate(0 -9)">LEFT</text>
                  <text x="37" y="28" fontSize="5" fontWeight="600" fill="#555" transform="skewY(-22) translate(0 15)">FRONT</text>
                  <text x="30" y="12" fontSize="5" fontWeight="600" fill="#777">TOP</text>
                </svg>
              </Cube>
            </Viewport>
          </Viewports>
          <Slider><button aria-label="Previous frame">&lt;</button><output>0 / 100</output></Slider>
          <TrackBar>
            <TrackButton aria-label="Open mini curve editor"><Icon name="trackOpen" size={18} /></TrackButton>
            <Ruler>{Array.from({ length: 101 }, (_, i) => <Tick key={i} $now={i === 0}>{tickLabel(i)}</Tick>)}</Ruler>
          </TrackBar>
        </Stage>

        <Panel>
          <PanelTabs>{["sun", "modify", "hierarchy", "motion", "display", "hammer"].map((n) => <button key={n} aria-label={n}><Icon name={n} size={20} /></button>)}</PanelTabs>
          <PanelCats>{["sphere", "shapes", "light", "camera", "tape", "waves", "systems"].map((n, i) => <Cat key={n} aria-label={n} $on={i === 0}><Icon name={n} size={17} /></Cat>)}</PanelCats>
          <PanelSelect><Select label="Category" value="Standard Primitives" $h={18} $pad={2} /></PanelSelect>
          <Rollout $top={2} $pb={1}>
            <RolloutHead><span>-</span><span>Object Type</span></RolloutHead>
            <AutoGrid><input type="checkbox" />AutoGrid</AutoGrid>
            <ObjGrid>{primitives.map((p) => <FlatButton key={p} $h={17}>{p}</FlatButton>)}</ObjGrid>
          </Rollout>
          <Rollout $top={5} $pb={5}>
            <RolloutHead><span>-</span><span>Name and Color</span></RolloutHead>
            <NameRow><input aria-label="Object name" /><Swatch $c="#8c0b38" aria-label="Object color" /><Swatch $c="#8a4a1c" aria-label="Material color" /></NameRow>
          </Rollout>
        </Panel>
      </Main>

      <Status>
        <Listener><input aria-label="Macro recorder" /><input aria-label="Script listener" defaultValue="Max to Physc:" /></Listener>
        <Lines>
          <Line>
            <Sunk>None Selected</Sunk>
            <LineIcons><Icon name="lock" size={12} /><Icon name="gear" size={14} /></LineIcons>
            <Coord>X:<input /></Coord><Coord>Y:<input /></Coord><Coord>Z:<input /></Coord>
            <Sunk $w={94}>Grid = 1000.0mm</Sunk>
          </Line>
          <Line>
            <Sunk>Click or click-and-drag to select objects</Sunk>
            <Isolate $on $h={20} aria-label="Isolate"><Icon name="cubeOut" size={14} /></Isolate>
            <Sunk $w={94}>Add Time Tag</Sunk>
          </Line>
        </Lines>
        <KeyArea>
          <FlatButton $h={41} aria-label="Set keys"><Icon name="bigKey" size={23} /></FlatButton>
          <FlatButton $h={20}>Auto Key</FlatButton>
          <Select label="Key set" value="Selected" $h={18} $pad={2} />
          <FlatButton $h={20}>Set Key</FlatButton>
          <KeyLine><Ctl aria-label="Tangents"><Icon name="sine" size={18} /></Ctl><FlatButton $h={20}>Key Filters...</FlatButton></KeyLine>
        </KeyArea>
        <Transport>
          <div>
            {["start", "prev", "play", "next", "end"].map((n, i) => <Ctl key={n} aria-label={n} $sep={i === 0 || i === 3 || i === 4}><Icon name={n} size={17} h={15} /></Ctl>)}
            {["zoom", "zoomAll", "extents", "extAll"].map((n) => <Ctl key={n} aria-label={n}><Icon name={n} size={17} /></Ctl>)}
          </div>
          <div>
            <Ctl aria-label="Key mode"><Icon name="keyMode" size={16} /></Ctl>
            <Frame defaultValue="0" />
            <Ctl $w={12} $sep aria-label="Frame spinner"><svg width="8" height="12" viewBox="0 0 8 12"><path d="M4 1l3 3H1zM4 11l3-3H1z" fill="#bbb" /></svg></Ctl>
            <Ctl $w={22} aria-label="Time configuration"><Icon name="timeCfg" size={15} /></Ctl>
            {["region", "hand", "orbit", "maxi"].map((n) => <Ctl key={n} aria-label={n}><Icon name={n} size={16} /></Ctl>)}
          </div>
        </Transport>
      </Status>

      <Taskbar>
        <StartButton aria-label="Start"><Icon name="windows" size={18} /></StartButton>
        <Cortana><Ring /><input placeholder="Ask me anything" /><Icon name="mic" size={15} /></Cortana>
        <Task aria-label="Task view" $w={48}><Icon name="taskview" size={20} /></Task>
        <Task aria-label="File Explorer"><Icon name="explorer" size={21} /></Task>
        <Task aria-label="Edge"><Icon name="edge" size={20} /></Task>
        <Task aria-label="Store"><Icon name="store" size={21} /></Task>
        <Task aria-label="Skype" $open><Icon name="skype" size={22} /></Task>
        <Task aria-label="Chrome" $open><Icon name="chrome" size={21} /></Task>
        <Task aria-label="3ds Max" $on><MaxLogo size={19} plate="#333" ink="#ddd" /></Task>
        <Tray>
          {[["chevUp", 12], ["wifi", 14], ["battery", 15], ["volume", 16]].map(([n, s]) => <TrayButton key={n} aria-label={n}><Icon name={n} size={s} /></TrayButton>)}
          <Lang>ENG</Lang>
          <Clock><span>9:27 PM</span><span>11/26/2016</span></Clock>
          <Notify aria-label="Notifications"><Icon name="note" size={16} /><Badge>35</Badge></Notify>
        </Tray>
      </Taskbar>

      <ImportDialog />
    </Window>
  );
}
